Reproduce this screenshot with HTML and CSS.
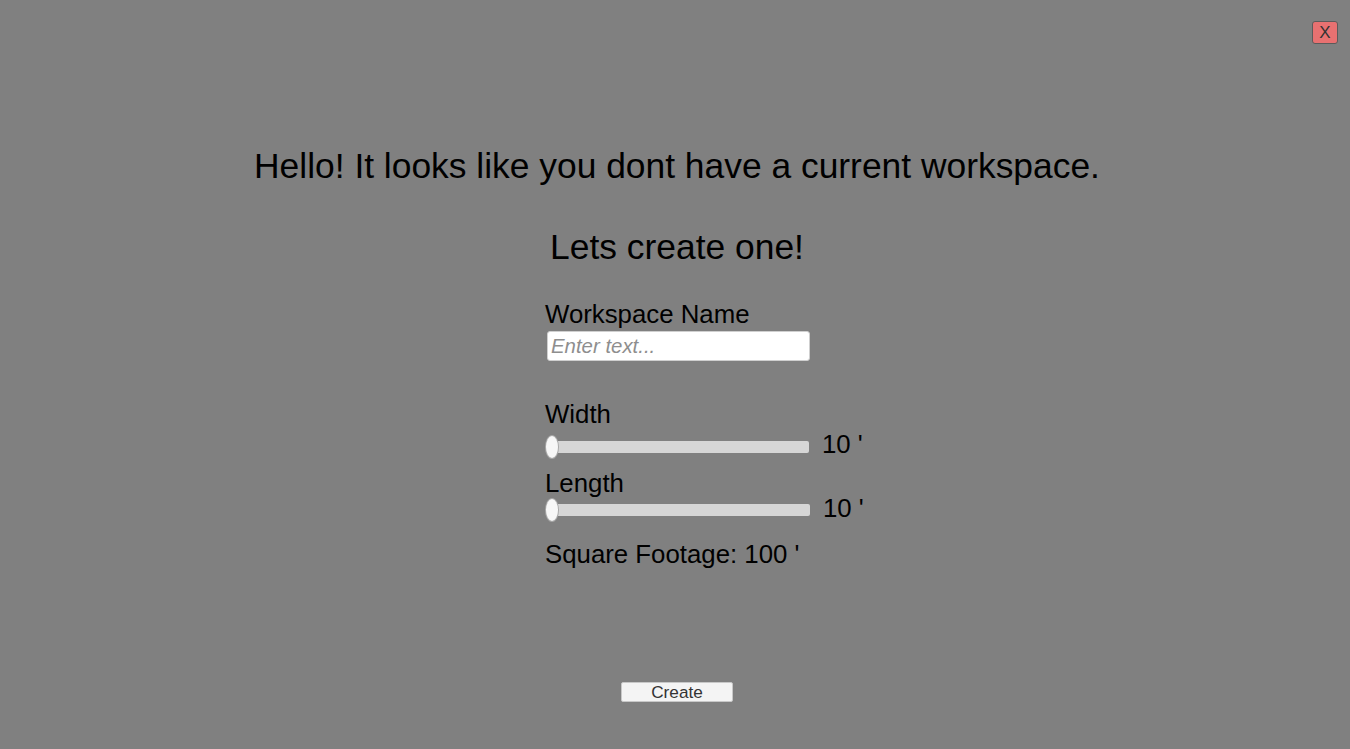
FILE: index.html
```html
<!DOCTYPE html>
<html>
<head>
<meta charset="utf-8">
<link rel="stylesheet" href="styles.css">
</head>
<body>
<div class="screen">
  <div class="topbar"><button class="close">X</button></div>
  <h1 class="title">Hello! It looks like you dont have a current workspace.</h1>
  <h2 class="subtitle">Lets create one!</h2>
  <div class="form">
    <div class="label label-name">Workspace Name</div>
    <div class="input"><span class="placeholder">Enter text...</span></div>
    <div class="label label-width">Width</div>
    <div class="slider-row row-width">
      <div class="slider"><div class="thumb"></div></div>
      <div class="value">10 '</div>
    </div>
    <div class="label label-length">Length</div>
    <div class="slider-row row-length">
      <div class="slider wide"><div class="thumb"></div></div>
      <div class="value">10 '</div>
    </div>
    <div class="label label-sq">Square Footage: 100 '</div>
  </div>
  <div class="actions"><button class="create">Create</button></div>
</div>
</body>
</html>
```
FILE: styles.css
```css
html, body {
  margin: 0;
  padding: 0;
  background: #808080;
  font-family: "Liberation Sans", Arial, sans-serif;
  color: #000;
}
.screen {
  width: 1350px;
  height: 749px;
  display: flex;
  flex-direction: column;
  overflow: hidden;
}
.topbar {
  display: flex;
  justify-content: flex-end;
  padding: 21px 12px 0 0;
  height: 23px;
}
.close {
  width: 26px;
  height: 23px;
  box-sizing: border-box;
  background: #e87171;
  border: 1px solid #5b5b5b;
  border-radius: 3px;
  font-family: "Liberation Sans", Arial, sans-serif;
  font-size: 17px;
  color: #333;
  padding: 0;
  line-height: 21px;
}
.title, .subtitle {
  margin: 0;
  font-weight: normal;
  font-size: 35.4px;
  line-height: 46px;
  text-align: center;
  padding-left: 4px;
}
.title { margin-top: 99px; }
.subtitle { margin-top: 35px; }
.form {
  width: 264px;
  margin: 0 auto;
  display: flex;
  flex-direction: column;
  position: relative;
  left: 4px;
}
.label {
  font-size: 25.8px;
  line-height: 30px;
  white-space: nowrap;
  margin-left: -2px;
}
.label-name { margin-top: 29px; }
.input {
  margin-top: 2px;
  width: 263px;
  height: 30px;
  box-sizing: border-box;
  background: #fff;
  border: 1px solid #cfcfcf;
  border-radius: 3px;
  padding-left: 3px;
  display: flex;
  align-items: center;
}
.placeholder {
  font-style: italic;
  font-size: 20.4px;
  color: #8e8e8e;
}
.label-width { margin-top: 38px; }
.slider-row {
  display: flex;
  align-items: center;
  height: 22px;
  margin-top: 7px;
}
.row-length { margin-top: 1px; }
.label-length { margin-top: 10px; }
.label-sq { margin-top: 18px; }
.slider {
  flex: none;
  position: relative;
  width: 262px;
  height: 12px;
  background: #d6d6d6;
  border-radius: 2px;
}
.slider.wide { width: 263px; }
.thumb {
  position: absolute;
  left: -1px;
  top: -5px;
  width: 12px;
  height: 22px;
  border-radius: 50%;
  background: #f7f7f7;
  box-shadow: 0 0 0 1px #a8a8a8;
}
.value {
  flex: none;
  margin-left: 13px;
  margin-bottom: 6px;
  font-size: 25.8px;
  white-space: nowrap;
}
.row-length .value { margin-left: 13px; margin-bottom: 4px; }
.actions {
  display: flex;
  justify-content: center;
  margin-top: 113px;
}
.create {
  width: 112px;
  height: 20px;
  box-sizing: border-box;
  background: #f4f4f4;
  border: 1px solid #c8c8c8;
  border-radius: 2px;
  font-family: "Liberation Sans", Arial, sans-serif;
  font-size: 17.2px;
  color: #333;
  padding: 0;
  line-height: 18px;
  position: relative;
  left: 2px;
}
```
